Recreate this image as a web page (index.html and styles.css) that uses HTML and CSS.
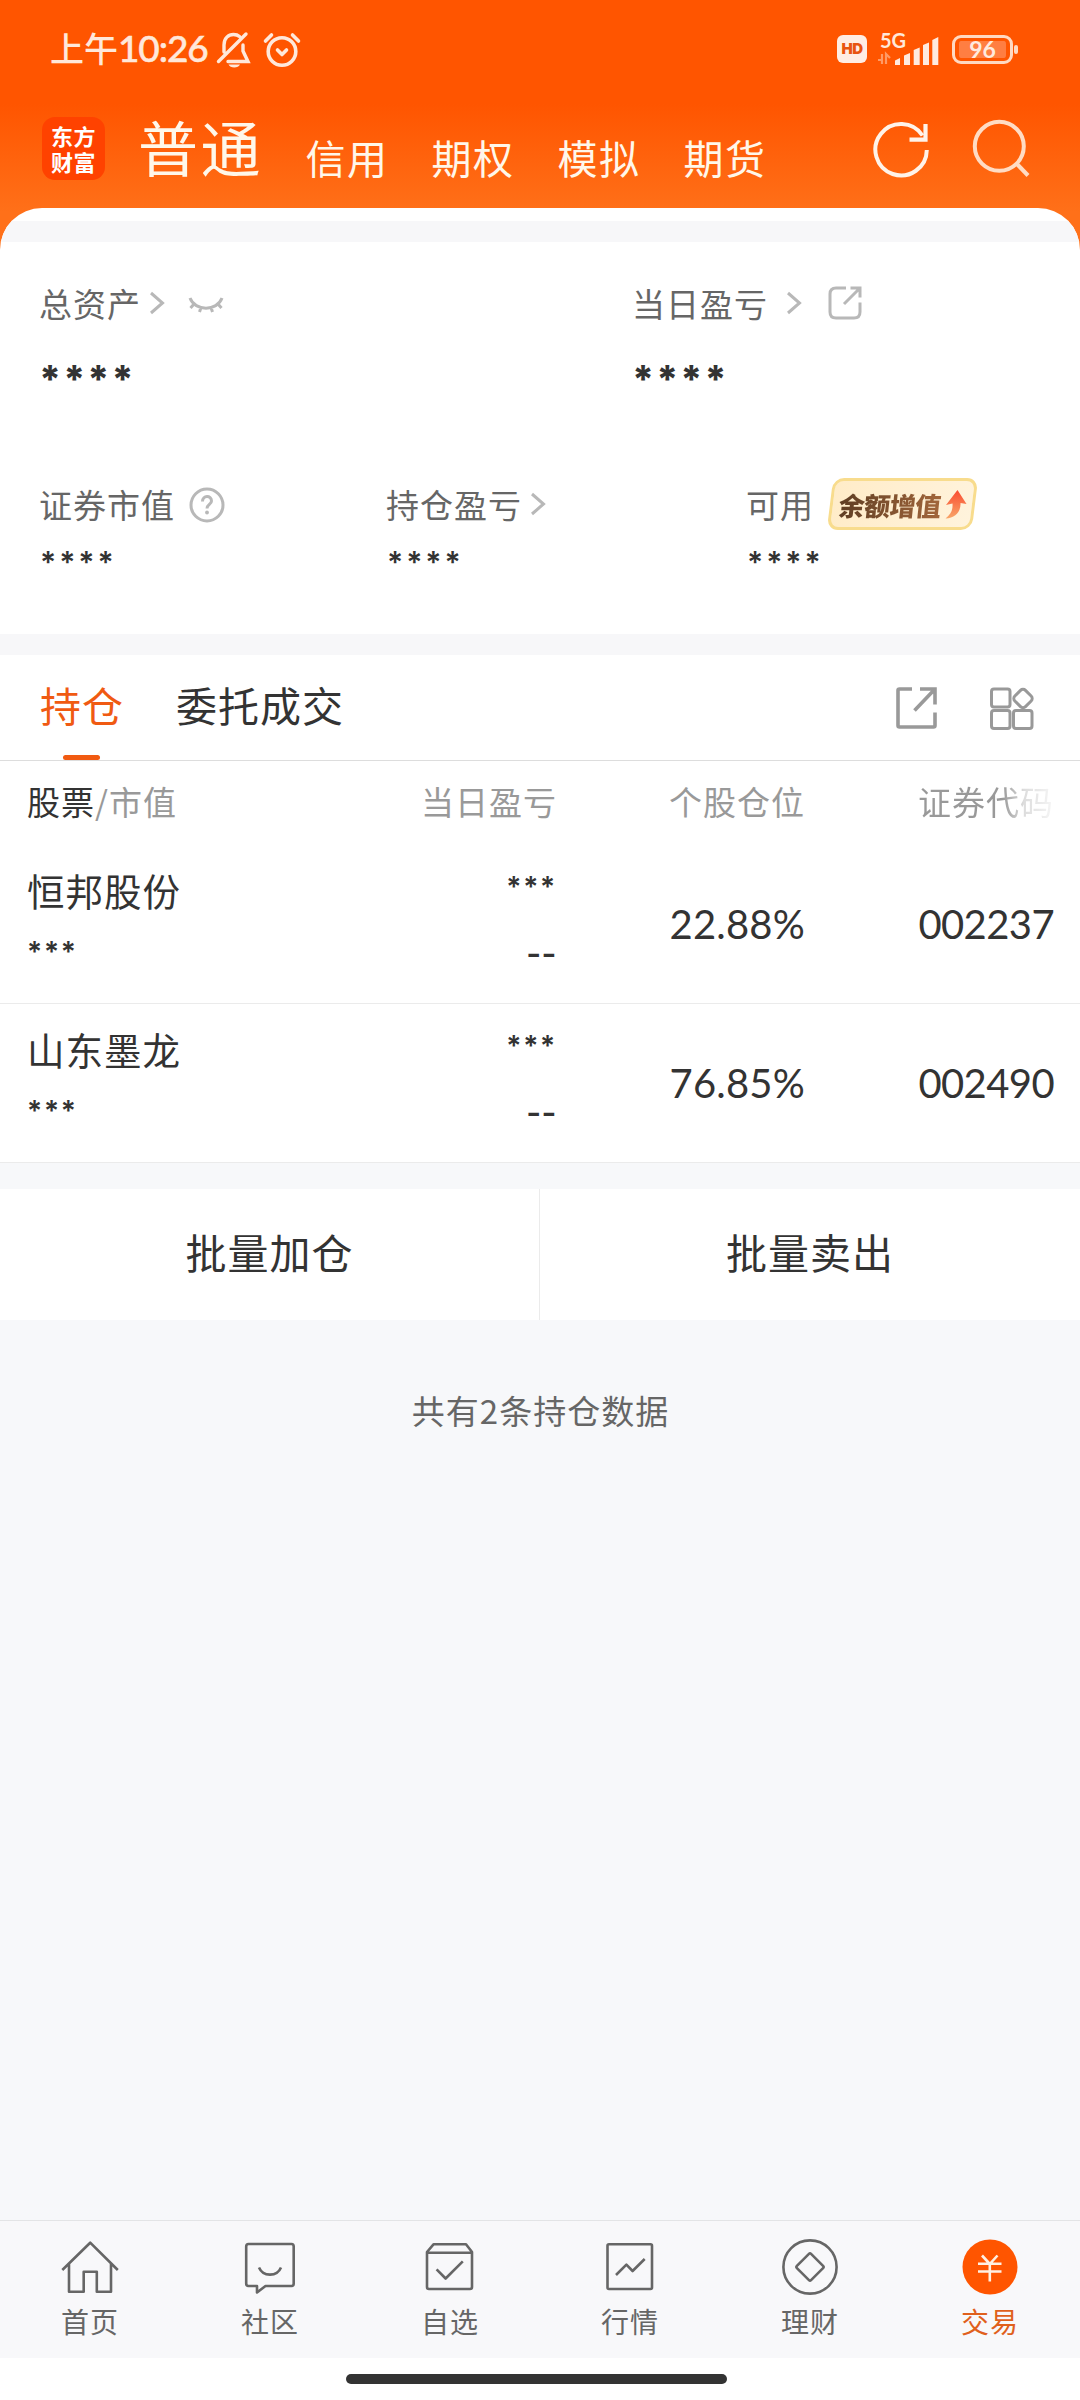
FILE: index.html
```html
<!DOCTYPE html>
<html lang="zh-CN">
<head>
<meta charset="utf-8">
<title>交易</title>
<link rel="stylesheet" href="styles.css">
</head>
<body>
<header class="top">
  <div class="status">
    <span class="clock">上午<span class="clock-num">10:26</span></span>
    <svg class="ic-bell" width="36" height="38" viewBox="0 0 36 38" fill="none" stroke="#ffe8da" stroke-width="3.4" stroke-linecap="round">
      <path d="M8 22V15C8 8 12.500 4.500 17.500 4.500C20 4.500 22 5.200 23.500 6.500M2.500 31.500L30 4M27 15V21L32 31.500H12"/>
      <path d="M12.500 34.500H24C22.500 38.500 14 38.500 12.500 34.500Z" fill="#ffe8da" stroke="none"/>
    </svg>
    <svg class="ic-alarm" width="40" height="38" viewBox="0 0 40 38" fill="none" stroke="#ffe8da" stroke-width="3.6" stroke-linecap="round" stroke-linejoin="round">
      <circle cx="20" cy="21.500" r="13.800"/><path d="M15.500 20L20 24.500L24.500 20M3.500 11L9.500 5M36.500 11L30.500 5"/>
    </svg>
    <span class="hd">HD</span>
    <span class="signal">
      <span class="net">5G</span>
      <svg width="63" height="34" viewBox="0 0 63 34" fill="#ffeade">
        <path d="M19 34V29.500L24 27V34ZM28 34V24.500L34 22V34ZM37.700 34V19L43.700 16.500V34ZM47 34V14L53 11.500V34ZM56.300 34V9L62.300 6V34Z"/>
        <path d="M2 29H6V23M6 23V33M10 33V23L14 27" fill="none" stroke="#ff9a66" stroke-width="2.200"/>
      </svg>
    </span>
    <span class="battery">96</span>
  </div>
  <nav class="accounts">
    <span class="logo"><span>东方</span><span>财富</span></span>
    <b class="acct acct-on">普通</b>
    <span class="acct">信用</span>
    <span class="acct">期权</span>
    <span class="acct">模拟</span>
    <span class="acct acct-last">期货</span>
    <svg class="ic-refresh" width="60" height="60" viewBox="0 0 60 60" fill="none" stroke="#fff3e9" stroke-width="4">
      <path d="M55.800 31A25.700 25.700 0 1 1 51.500 16.500"/><path d="M54.500 5V20.700H38.500" stroke-width="4.200"/>
    </svg>
    <svg class="ic-search" width="60" height="60" viewBox="0 0 60 60" fill="none" stroke="#ffdcc4" stroke-width="4">
      <circle cx="28.300" cy="27.300" r="24.500"/><path d="M45 44L57 56.500"/>
    </svg>
  </nav>
</header>

<main class="sheet">
  <div class="strip"></div>
  <section class="assets">
    <div class="pair">
      <div class="cell">
        <div class="label">总资产
          <svg class="chev" width="16" height="24" viewBox="0 0 16 24"><path d="M2 2L13.500 12L2 22"/></svg>
          <svg class="eye" width="36" height="20" viewBox="0 0 36 20"><path d="M2 3C7 16.500 29 16.500 34 3M6.500 8.500L2.500 13M13 12.500L11.500 17M23 12.500L24.500 17M29.500 8.500L33.500 13"/></svg>
        </div>
        <div class="stars big">****</div>
      </div>
      <div class="cell">
        <div class="label">当日盈亏
          <svg class="chev far" width="16" height="24" viewBox="0 0 16 24"><path d="M2 2L13.500 12L2 22"/></svg>
          <svg class="share" width="34" height="34" viewBox="0 0 34 34"><path d="M18 2H8Q2 2 2 8V26Q2 32 8 32H26Q32 32 32 26V16.500M22.500 2H32V11.500M32 2L16 18"/></svg>
        </div>
        <div class="stars big">****</div>
      </div>
    </div>
    <div class="trio">
      <div class="cell">
        <div class="label">证券市值
          <svg class="help" width="36" height="36" viewBox="0 0 36 36"><circle cx="18" cy="18" r="16"/><path d="M13.500 14.500C13.500 8 22.500 8 22.500 14C22.500 17.500 18 17.500 18 21.500"/><circle class="dot" cx="18" cy="25.500" r="1.900"/></svg>
        </div>
        <div class="stars">****</div>
      </div>
      <div class="cell">
        <div class="label">持仓盈亏
          <svg class="chev" width="16" height="24" viewBox="0 0 16 24"><path d="M2 2L13.500 12L2 22"/></svg>
        </div>
        <div class="stars">****</div>
      </div>
      <div class="cell">
        <div class="label">可用
          <span class="badge"><span class="badge-text">余额增值</span>
            <svg class="rise" width="22" height="29" viewBox="0 0 22 29"><defs><linearGradient id="up" x1="0" y1="0" x2="0" y2="1"><stop offset="0" stop-color="#fa4b30"/><stop offset="1" stop-color="#f8a568"/></linearGradient></defs><path d="M12.500 0L21.500 14L15.500 13C16 21 11 28 .5 28.500C6 24 8 20 7.500 13.500L1 15Z" fill="url(#up)"/></svg>
          </span>
        </div>
        <div class="stars">****</div>
      </div>
    </div>
  </section>
  <div class="gap"></div>
  <section class="holdings">
    <div class="tabs">
      <span class="tab tab-on">持仓</span>
      <span class="tab">委托成交</span>
      <svg class="ic-export" width="44" height="44" viewBox="0 0 44 44"><path d="M17 3H4.500Q3 3 3 4.500V39.500Q3 41 4.500 41H38.500Q40 41 40 39.500V26.500M25 3H40V18.500M40 3L19.500 24.500"/></svg>
      <svg class="ic-grid" width="46" height="44" viewBox="0 0 46 44"><rect x="2.500" y="3" width="18.500" height="18" rx="2.500"/><rect x="2.500" y="24.500" width="18.500" height="18" rx="2.500"/><rect x="24.500" y="24.500" width="18.500" height="18" rx="2.500"/><rect x="26.500" y="5" width="15" height="15" rx="3.500" transform="rotate(45 34 12.500)"/></svg>
    </div>
    <div class="row head">
      <span><b>股票</b>/市值</span><span>当日盈亏</span><span>个股仓位</span><span class="fade">证券代码</span>
    </div>
    <div class="row">
      <div class="name">恒邦股份<span class="stars small">***</span></div>
      <div class="pl"><span class="stars small">***</span><span class="dash">--</span></div>
      <span class="num">22.88%</span><span class="num code">002237</span>
    </div>
    <div class="row">
      <div class="name">山东墨龙<span class="stars small">***</span></div>
      <div class="pl"><span class="stars small">***</span><span class="dash">--</span></div>
      <span class="num">76.85%</span><span class="num code">002490</span>
    </div>
  </section>
  <div class="batch"><span>批量加仓</span><span>批量卖出</span></div>
  <p class="count">共有2条持仓数据</p>
</main>

<footer>
  <nav class="bar">
    <span class="item"><svg width="64" height="60" viewBox="0 0 64 60"><path d="M4.300 33L32.200 5.700L59.800 33M11 27V54.700H25.700V34.700H38.800V54.700H53V27"/></svg>首页</span>
    <span class="item"><svg width="64" height="60" viewBox="0 0 64 60"><path d="M10.500 7H53.500Q55.700 7 55.700 9.500V46.500Q55.700 49 53.500 49H27.500L19 55.500V49H10.500Q8.200 49 8.200 46.500V9.500Q8.200 7 10.500 7ZM21 30.500C25 40 39 40 43 30.500"/></svg>社区</span>
    <span class="item"><svg width="64" height="60" viewBox="0 0 64 60"><path d="M9 15L15.500 7.300H48L54 15V50Q54 52 52 52H11Q9 52 9 50ZM9 15.700H54M18.600 32.300L27.600 41.500L44.800 24.300"/></svg>自选</span>
    <span class="item"><svg width="64" height="60" viewBox="0 0 64 60"><rect x="9.500" y="7.300" width="44.500" height="44.700" rx="1.500"/><path d="M18 38L28.400 27.700L34.600 34L46.700 22"/></svg>行情</span>
    <span class="item"><svg width="64" height="60" viewBox="0 0 64 60"><circle cx="32" cy="30" r="26.600"/><rect x="22" y="20" width="20" height="20" rx="1.500" transform="rotate(45 32 30)"/></svg>理财</span>
    <span class="item item-on"><svg width="64" height="60" viewBox="0 0 64 60"><circle cx="32" cy="30" r="27.500"/><path d="M24 18.500L31.800 27L39.500 18.500M31.800 27V44.500M20 26.800H43.500M20 34.500H43.500"/></svg>交易</span>
  </nav>
  <div class="home"><i></i></div>
</footer>
</body>
</html>
```
FILE: styles.css
```css
* { box-sizing: border-box; }
body {
  margin: 0; width: 1080px; height: 2400px;
  display: flex; flex-direction: column;
  background: #f7f8fa; color: #333;
  font-family: "Noto Sans CJK SC", sans-serif;
  font-size: 33px; letter-spacing: 1px; white-space: nowrap;
}
svg { flex: none; display: block; }

.top {
  height: 256px; flex: none;
  background: linear-gradient(#ff5500 0, #ff5500 104px, #ff7019 212px, #ff7019);
}
.status { height: 98px; padding: 0 62px 0 50px; display: flex; align-items: center; color: #ffe8da; }
.clock { width: 158px; font-size: 34px; letter-spacing: 0; font-weight: 500; line-height: 40px; margin-top: -2px; }
.clock-num { font-family: Lato, sans-serif; font-size: 37px; letter-spacing: -1.1px; -webkit-text-stroke: .5px #ffe8da; }
.ic-bell { margin-left: 8px; }
.ic-alarm { margin: 0 auto 0 10px; }
.hd {
  width: 30px; height: 28px; border-radius: 6px; background: #ffede3; color: #e8540f;
  font: 900 15px/28px Inter, sans-serif; letter-spacing: -.5px; text-align: center;
}
.signal { position: relative; margin-left: 9px; margin-top: -2px; }
.net { position: absolute; left: 4px; top: -1px; font: 700 20px/20px Lato, sans-serif; letter-spacing: 0; }
.battery {
  position: relative; width: 61px; height: 29px; margin: 0 5px 0 13px;
  border: 3px solid #ffd9c2; border-radius: 9px; color: #ffeade;
  background: #ff7e42 content-box; padding: 3px 4px;
  font: 700 23px/17px Lato, sans-serif; letter-spacing: 0; text-align: center;
}
.battery::after { content: ""; position: absolute; right: -8px; top: 7px; width: 4px; height: 9px; border-radius: 2px; background: #ffd9c2; }

.accounts { height: 110px; padding: 19px 48px 0 42px; display: flex; align-items: flex-start; color: #fff7ea; }
.logo {
  width: 63px; height: 63px; border-radius: 13px; background: #ff4200; color: #fff;
  display: grid; grid-template-rows: 26px 26px; justify-content: center; align-content: center;
  font-size: 22px; font-weight: 700; line-height: 24px; letter-spacing: .5px; margin-right: 33px;
}
.acct { font-size: 40px; line-height: 50px; letter-spacing: 1.500px; width: 82px; margin: 15px 44px 0 0; }
.acct-on { font-size: 60px; font-weight: 400; line-height: 66px; letter-spacing: 2.500px; width: 124px; margin: -4px 43.500px 0 0; }
.acct-last { margin-right: 0; }
.ic-refresh { margin: 2px 0 0 auto; }
.ic-search { margin: 2px 1px 0 40px; }

.sheet { margin-top: -48px; border-radius: 42px 42px 0 0; background: #fff; overflow: hidden; flex: none; }
.strip { height: 21px; margin-top: 13px; background: #f7f7f9; }
.assets { height: 392px; padding: 36px 0 0 39px; color: #666; }
.pair, .trio { display: flex; }
.cell { flex: none; }
.pair { height: 201px; }
.pair .cell:first-child { width: 593px; }
.trio .cell { width: 347px; }
.trio .cell:nth-child(2) { width: 360px; }
.label { display: flex; align-items: center; height: 50px; }
.label svg { fill: none; stroke: #b8b8b8; stroke-width: 3; }
.chev { margin-left: 8px; }
.far { margin-left: 18px; }
.eye { margin: 3px 0 0 23px; }
.share { margin-left: 26px; }
.help { margin: 2px 0 0 14px; }
.label .dot { fill: #b8b8b8; stroke: none; }
.stars { font: 600 30px/30px Inter, sans-serif; letter-spacing: 3px; color: #333; display: block; }
.trio .stars { margin: 18px 0 0 1px; }
.stars.big { font-size: 38px; font-weight: 800; letter-spacing: 2px; line-height: 40px; margin-top: 31px; }
.stars.small { font-size: 28px; line-height: 30px; letter-spacing: 1.800px; }
.badge {
  position: relative; z-index: 0; width: 151px; height: 52px; margin-left: 13px; padding-left: 12px;
  display: flex; align-items: center; gap: 4px;
}
.badge::before {
  content: ""; position: absolute; z-index: -1; inset: 0 3px; transform: skewX(-7deg);
  border: 3px solid #f8dc8d; border-radius: 11px; background: linear-gradient(100deg, #ffecc8, #fff3dc);
}
.badge-text {
  font-size: 26px; font-weight: 900; letter-spacing: -.5px; transform: skewX(-6deg);
  background: linear-gradient(90deg, #5f3e23, #a2663b); background-clip: text; color: transparent;
}
.badge .rise { stroke: none; }

.gap { height: 21px; background: #f7f7f9; }
.tabs { height: 106px; padding: 0 45px 0 40px; border-bottom: 1px solid #ddd; display: flex; align-items: center; }
.tab { height: 105px; line-height: 99px; font-size: 41px; margin-right: 52px; }
.tab-on { position: relative; color: #f05a12; }
.tab-on::after { content: ""; position: absolute; left: 23px; bottom: 0; width: 37px; height: 5px; border-radius: 3px; background: #f15a11; }
.ic-export, .ic-grid { fill: none; stroke: #999; stroke-width: 3.600; }
.ic-export { margin-left: auto; }
.ic-grid { margin-left: 50px; stroke-width: 3; }
.row {
  height: 159px; padding: 0 26px 0 27px; border-bottom: 1px solid #ebebeb;
  display: grid; grid-template-columns: 1fr 200px 250px 249px; justify-items: end; align-items: center;
}
.row > :first-child { justify-self: start; }
.head { height: 84px; border: 0; color: #999; padding-bottom: 4px; }
.head > :nth-child(2) { margin-right: -2px; }
.head b { font-weight: 400; color: #333; }
.fade { background: linear-gradient(90deg, #999 62%, #ddd 78%, #f4f4f4 98%); background-clip: text; color: transparent; }
.name { font-size: 37.500px; line-height: 50px; height: 158px; padding-top: 20px; }
.name .stars { margin-top: 22px; }
.pl { height: 158px; padding-top: 27px; text-align: right; margin-right: -2px; }
.dash { display: block; font: 600 32px/30px Inter, sans-serif; letter-spacing: .5px; margin-top: 37px; }
.num { font: 400 40px/50px Lato, sans-serif; letter-spacing: .2px; }
.code { letter-spacing: -.6px; }

.batch { border-top: 26px solid #f7f8fa; height: 157px; display: grid; grid-template-columns: 540px 540px; }
.batch span { font-size: 41px; line-height: 125px; text-align: center; }
.batch span:first-child { border-right: 1px solid #ebebeb; }
.count { margin: 0; background: #f7f8fa; color: #666; text-align: center; line-height: 50px; padding: 65px 0 0 1px; }

footer { margin-top: auto; flex: none; background: #fff; height: 180px; color: #666; }
.bar { height: 138px; border-top: 1px solid #e3e4e6; background: #f8f8fa; display: grid; grid-template-columns: repeat(6, 180px); }
.item { display: flex; flex-direction: column; align-items: center; font-size: 28px; line-height: 40px; padding-top: 16px; gap: 4px; }
.item svg { fill: none; stroke: #666; stroke-width: 2.600; stroke-linejoin: round; }
.item-on { color: #e0601c; }
.item-on circle { fill: #f50; stroke: none; }
.item-on path { stroke: #fff0e2; }
.home { display: flex; justify-content: center; padding: 16px 7px 0 0; }
.home i { width: 381px; height: 10px; border-radius: 5px; background: #333; }
```
